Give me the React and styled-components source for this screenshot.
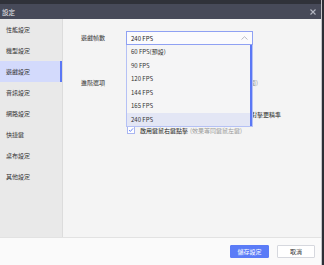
import React from 'react';
import styled, { createGlobalStyle } from 'styled-components';

const GlobalStyle = createGlobalStyle`
  html, body {
    margin: 0;
    padding: 0;
    background: #2c2e35;
  }
  body {
    font-family: "Noto Sans CJK TC", "Noto Sans", sans-serif;
  }
`;

const menuItems = ['性能設定', '機型設定', '遊戲設定', '音訊設定', '網路設定', '快捷鍵', '桌布設定', '其他設定'];
const fpsOptions = ['60 FPS(預設)', '90 FPS', '120 FPS', '144 FPS', '165 FPS', '240 FPS'];

function CheckMark({ on }) {
  return (
    <Check>
      {on && (
        <svg width="6" height="6" viewBox="0 0 6 6">
          <path d="M1 3.1L2.4 4.4L5 1.4" fill="none" stroke="#5b78f5" strokeWidth="0.9" />
        </svg>
      )}
    </Check>
  );
}

function App() {
  return (
    <>
      <GlobalStyle />
      <Window>
        <TitleBar>
          <Title>設定</Title>
          <CloseBtn>
            <svg width="6" height="6" viewBox="0 0 6 6">
              <path d="M0.5 0.5L5.5 5.5M5.5 0.5L0.5 5.5" stroke="#b4b7c2" strokeWidth="1.1" />
            </svg>
          </CloseBtn>
        </TitleBar>
        <Body>
          <Sidebar>
            {menuItems.map((m) => (
              <MenuItem key={m} $active={m === '遊戲設定'}>{m}</MenuItem>
            ))}
          </Sidebar>
          <Content>
            <Row>
              <Label $lh={14}>遊戲幀數</Label>
              <SelectWrap>
                <Select>
                  <span>240 FPS</span>
                  <svg width="7" height="4" viewBox="0 0 7 4">
                    <path d="M0.5 3.5L3.5 0.7L6.5 3.5" fill="none" stroke="#a8abb5" strokeWidth="0.8" />
                  </svg>
                </Select>
                <Dropdown>
                  {fpsOptions.map((o) => (
                    <Option key={o} $selected={o === '240 FPS'}>{o}</Option>
                  ))}
                  <ScrollBar />
                </Dropdown>
              </SelectWrap>
            </Row>
            <Row $top={29}>
              <Label $lh={18}>進階選項</Label>
              <Options>
                <Line><Hint>(建議於高刷新率螢幕開啟，以獲得更流暢的畫面)</Hint></Line>
                <Line><CheckMark />啟用高精度滑鼠輸入</Line>
                <Line><CheckMark />啟用滑鼠加速度修正功能，使開鏡瞄準時{'\u2002'}對擊更精準</Line>
                <Line>
                  <CheckMark on />
                  啟用鍵鼠右鍵點擊 <Hint>(效果等同鍵鼠左鍵)</Hint>
                </Line>
              </Options>
            </Row>
          </Content>
        </Body>
        <Footer>
          <PrimaryButton>儲存設定</PrimaryButton>
          <Button>取消</Button>
        </Footer>
      </Window>
    </>
  );
}

const Window = styled.div`
  width: 321px;
  height: 265px;
  display: flex;
  flex-direction: column;
  border-right: 1px solid #c4c5ca;
  background: #f4f4f4;
`;

const TitleBar = styled.div`
  height: 15px;
  border-top: 4px solid #30323a;
  background: #474a59;
  display: flex;
  align-items: center;
  justify-content: space-between;
  padding: 0 5px 0 2px;
`;

const Title = styled.div`
  color: #e6e7ec;
  font-size: 6.5px;
`;

const CloseBtn = styled.div`
  display: flex;
  align-items: center;
`;

const Body = styled.div`
  flex: 1;
  display: flex;
  min-height: 0;
`;

const Sidebar = styled.div`
  width: 62px;
  background: #e9e9e9;
  border-right: 1px solid #dcdcdc;
  display: flex;
  flex-direction: column;
`;

const MenuItem = styled.div`
  height: 21px;
  display: flex;
  align-items: center;
  padding-left: 6px;
  font-size: 6px;
  color: #333;
  background: ${(p) => (p.$active ? '#d3dafc' : 'transparent')};
  box-shadow: ${(p) => (p.$active ? 'inset -2px 0 0 #5b78f5' : 'none')};
`;

const Content = styled.div`
  flex: 1;
  background: #f4f4f4;
  padding: 12px 0 0 18px;
`;

const Row = styled.div`
  display: flex;
  align-items: flex-start;
  margin-top: ${(p) => p.$top || 0}px;
`;

const Label = styled.div`
  width: 45px;
  flex-shrink: 0;
  font-size: 6px;
  color: #333;
  line-height: ${(p) => p.$lh}px;
`;

const SelectWrap = styled.div`
  position: relative;
  width: 127px;
`;

const Select = styled.div`
  height: 12px;
  border: 1px solid #8fa1f3;
  background: #fbfbfd;
  display: flex;
  align-items: center;
  justify-content: space-between;
  padding: 0 4px 0 4px;
  font-size: 6px;
  color: #222;
`;

const Dropdown = styled.div`
  position: absolute;
  top: 14px;
  left: 0;
  width: 127px;
  box-sizing: border-box;
  border: 1px solid #b5c1f5;
  border-top: none;
  background: #f5f5f6;
  z-index: 2;
`;

const Option = styled.div`
  height: 13.5px;
  display: flex;
  align-items: center;
  padding-left: 4px;
  font-size: 6px;
  color: #333;
  background: ${(p) => (p.$selected ? '#e3e6f5' : 'transparent')};
`;

const ScrollBar = styled.div`
  position: absolute;
  top: 0;
  right: 0;
  width: 2px;
  height: 100%;
  background: #5b78f5;
`;

const Options = styled.div`
  display: flex;
  flex-direction: column;
`;

const Line = styled.div`
  height: 16px;
  display: flex;
  align-items: center;
  font-size: 6px;
  color: #222;
  white-space: nowrap;
`;

const Hint = styled.span`
  color: #9a9a9a;
  margin-left: 2px;
`;

const Check = styled.span`
  width: 6px;
  height: 6px;
  flex-shrink: 0;
  border: 1px solid #aab6f0;
  background: #fff;
  margin: 0 5px 0 1px;
  display: flex;
  align-items: center;
  justify-content: center;
`;

const Footer = styled.div`
  height: 27px;
  border-top: 1px solid #e2e2e2;
  background: #fafafa;
  display: flex;
  align-items: center;
  justify-content: flex-end;
  gap: 8px;
  padding-right: 6px;
`;

const Button = styled.button`
  width: 38px;
  height: 13px;
  padding: 0;
  border: 1px solid #d6d8de;
  border-radius: 1px;
  background: #fff;
  font-family: inherit;
  font-size: 6px;
  color: #333;
`;

const PrimaryButton = styled(Button)`
  width: 39px;
  border-color: #5b7cf7;
  background: #5b7cf7;
  color: #fff;
`;

export default App;
